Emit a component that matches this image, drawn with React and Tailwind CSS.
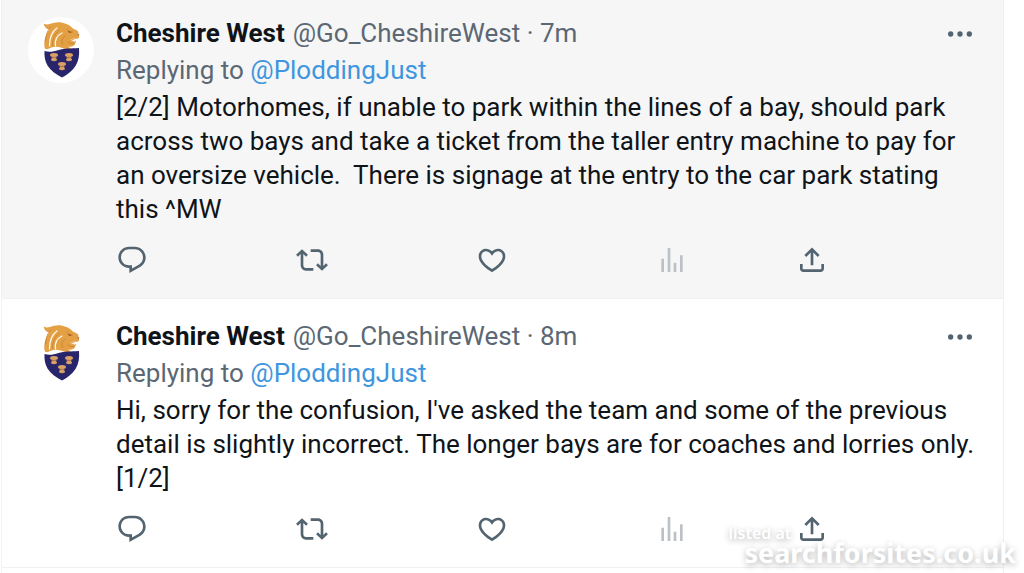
import React from 'react';

const TWEETS = [
  {
    id: 2,
    age: '7m',
    active: true,
    text: `[2/2] Motorhomes, if unable to park within the lines of a bay, should park
across two bays and take a ticket from the taller entry machine to pay for
an oversize vehicle.  There is signage at the entry to the car park stating
this ^MW`,
  },
  {
    id: 1,
    age: '8m',
    active: false,
    text: `Hi, sorry for the confusion, I've asked the team and some of the previous
detail is slightly incorrect. The longer bays are for coaches and lorries only.
[1/2]`,
  },
];

const ACTIONS = [
  {
    label: 'Reply',
    path: 'M1.751 10c0-4.42 3.584-8 8.005-8h4.366c4.49 0 8.129 3.64 8.129 8.13 0 2.96-1.607 5.68-4.196 7.11l-8.054 4.46v-3.69h-.067c-4.49.1-8.183-3.51-8.183-8.01zm8.005-6c-3.317 0-6.005 2.69-6.005 6 0 3.37 2.77 6.08 6.138 6.01l.351-.01h1.761v2.3l5.087-2.81c1.951-1.08 3.163-3.13 3.163-5.36 0-3.39-2.744-6.13-6.129-6.13H9.756z',
  },
  {
    label: 'Retweet',
    path: 'M4.5 3.88l4.432 4.14-1.364 1.46L5.5 7.55V16c0 1.1.896 2 2 2H13v2H7.5c-2.209 0-4-1.79-4-4V7.55L1.432 9.48.068 8.02 4.5 3.88zM16.5 6H11V4h5.5c2.209 0 4 1.79 4 4v8.45l2.068-1.93 1.364 1.46-4.432 4.14-4.432-4.14 1.364-1.46 2.068 1.93V8c0-1.1-.896-2-2-2z',
  },
  {
    label: 'Like',
    path: 'M16.697 5.5c-1.222-.06-2.679.51-3.89 2.16l-.805 1.09-.806-1.09C9.984 6.01 8.526 5.44 7.304 5.5c-1.243.07-2.349.78-2.91 1.91-.552 1.12-.633 2.78.479 4.82 1.074 1.97 3.257 4.27 7.129 6.61 3.87-2.34 6.052-4.64 7.126-6.61 1.111-2.04 1.03-3.7.477-4.82-.561-1.13-1.666-1.84-2.908-1.91zm4.187 7.69c-1.351 2.48-4.001 5.12-8.379 7.67l-.503.3-.504-.3c-4.379-2.55-7.029-5.19-8.382-7.67-1.36-2.5-1.41-4.86-.514-6.67.887-1.79 2.647-2.91 4.601-3.01 1.651-.09 3.368.56 4.798 2.01 1.429-1.45 3.146-2.1 4.796-2.01 1.954.1 3.714 1.22 4.601 3.01.896 1.81.846 4.17-.514 6.67z',
  },
  {
    label: 'Views',
    muted: true,
    path: 'M8.75 21V3h2v18h-2zM18 21V8.5h2V21h-2zM4 21l.004-10h2L6 21H4zm9.248 0v-7h2v7h-2z',
  },
  {
    label: 'Share',
    path: 'M12 2.59l5.7 5.7-1.41 1.42L13 6.41V16h-2V6.41l-3.3 3.3-1.41-1.42L12 2.59zM21 15l-.02 3.51c0 1.38-1.12 2.49-2.5 2.49H5.5C4.11 21 3 19.88 3 18.5V15h2v3.5c0 .28.22.5.5.5h12.98c.28 0 .5-.22.5-.5L19 15h2z',
  },
];

function Sheaf({ x, y }) {
  return (
    <g transform={`translate(${x} ${y})`} fill="#d9a066">
      <ellipse cx="0" cy="-2" rx="4" ry="2" />
      <rect x="-2" y="-1" width="4" height="3" />
      <ellipse cx="0" cy="2.6" rx="3" ry="1.6" />
      <path d="M-3 0.4h6" stroke="#8a5a4a" strokeWidth="0.7" />
    </g>
  );
}

function Avatar() {
  return (
    <div className="size-[66px] shrink-0 rounded-full bg-white">
      <svg viewBox="0 0 66 66" className="size-full" role="img" aria-label="Cheshire West">
        {/* lion */}
        <path
          fill="#e3a044"
          d="M15.500 6.500c2.500 1.500 4.500 1.200 7 .3 4-1.500 8-1.900 12-1 4.500 1 7.500 2.800 10 5.400l4.500 2.300c1.300.8 1.700 2 1.300 3.300l1 3.200c-.8 1.700-2.300 2-3.800 1.700l-3-.2 3.500 1.900c-.2 2.300-.8 4.200-2.500 5.400-1.500 1-3.500 1.300-5.500.6l3 2.400c-3 .9-6.500.4-9.500-1-5-1.900-9-1.100-13 1-2.300 1-3.700.2-4-1.800-.7-4.800.2-8.800 2-12.500 1-2.200 2-3.600 3.200-4.900-3.400-.6-5.400-2.600-6.200-6.100z"
        />
        <g fill="none" stroke="#fff8ea" strokeWidth="1.300" strokeLinecap="round">
          <path d="M29 11c-5 3.500-7.500 9-7.500 18" />
          <path d="M34 16c-5 2.500-7.500 7-6.500 13" />
        </g>
        <g fill="none" stroke="#c98331" strokeWidth="0.900" strokeLinecap="round">
          <path d="M23 10c-3 2.500-5 7-5.500 14" />
          <path d="M31 13.500c-4 3-6.500 8-6.500 15" />
          <path d="M37 19c-3 2-4 5-2.500 8.500" />
          <path d="M39 12.500c1.500 2 3.500 2.800 5.500 2.600" />
          <path d="M40 25c1.500 1.600 3.500 2 6 1.300" />
        </g>
        <path d="M39.500 14l4.500 1-2.500 1z" fill="#8c4d1c" />
        <path d="M49.500 17l2 .8-1.200 1z" fill="#8c4d1c" />
        <path d="M42 22.500c2 .2 4 .5 6.500.4l-2 1.800z" fill="#fff8ea" />
        {/* shield */}
        <path
          fill="#28256b"
          d="M16.500 34c5 1.600 9 .5 14-1 6-1.600 12-1.500 20.500-2 .6 7-.3 13-3.500 18-3.300 5-8 8.500-13.500 11.500-6-3-11.500-7-14.500-12-2.600-4.500-3.300-9.500-3-14.500z"
        />
        <Sheaf x={26} y={40} />
        <Sheaf x={41} y={40} />
        <Sheaf x={34} y={49} />
      </svg>
    </div>
  );
}

function Tweet({ tweet }) {
  return (
    <article
      className={`flex gap-[22px] border-b border-[#eff1f2] pr-[27px] pb-[22px] pl-[26px] ${
        tweet.active ? 'bg-[#f6f6f6] pt-[15px]' : 'bg-white pt-[19px]'
      }`}
    >
      <div className="pt-[2px]">
        <Avatar />
      </div>
      <div className="min-w-0 flex-1">
        <header className="flex h-[37px] items-center gap-2 whitespace-nowrap text-[#5b6874]">
          <h2 className="font-bold text-[#0f1419]">Cheshire West</h2>
          <span>@Go_CheshireWest · {tweet.age}</span>
          <button type="button" aria-label="More" className="ml-auto">
            <svg viewBox="0 0 24 24" className="size-8" fill="#536471">
              <circle cx="5" cy="12" r="2" />
              <circle cx="12" cy="12" r="2" />
              <circle cx="19" cy="12" r="2" />
            </svg>
          </button>
        </header>
        <p className="h-[38px] leading-[37px] text-[#5b6874]">
          Replying to <a href="#profile" className="text-[#4096de]">@PloddingJust</a>
        </p>
        <p className="leading-[34px] whitespace-pre text-[#0f1419]">{tweet.text}</p>
        <div className="mt-[18px] grid grid-cols-[9fr_9fr_9fr_7fr_9fr]">
          {ACTIONS.map((a) => (
            <button
              key={a.label}
              type="button"
              aria-label={a.label}
              className={`size-8 ${a.muted ? 'text-[#bbc1c6]' : 'text-[#536471]'}`}
            >
              <svg viewBox="0 0 24 24" className="size-full" fill="currentColor">
                <path d={a.path} />
              </svg>
            </button>
          ))}
        </div>
      </div>
    </article>
  );
}

export default function App() {
  return (
    <div className="relative min-h-screen overflow-hidden bg-white font-['Roboto',sans-serif] text-[26px]">
      <main className="mr-5 ml-px min-h-screen border-x border-[#eff1f2]">
        {TWEETS.map((t) => (
          <Tweet key={t.id} tweet={t} />
        ))}
      </main>

      {/* listing watermark */}
      <div className="absolute right-2 bottom-2 flex flex-col font-['Noto_Sans',sans-serif] text-white [text-shadow:0_2px_6px_rgb(0_0_0/0.3)]">
        <p className="-ml-4 text-base leading-4 font-semibold whitespace-nowrap">listed at</p>
        <p className="text-[27px] leading-6 font-bold">searchforsites.co.uk</p>
      </div>
    </div>
  );
}
